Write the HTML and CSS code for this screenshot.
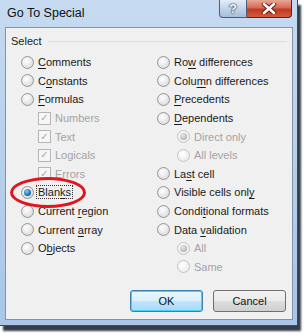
FILE: index.html
```html
<!DOCTYPE html>
<html lang="en">
<head>
    <meta charset="UTF-8">
    <title>Go To Special</title>
    <link rel="stylesheet" href="styles.css">
</head>
<body>
    <div class="window">
        <div class="titlebar">
            <span class="title">Go To Special</span>
            <div class="caption-btns">
                <div class="cap-btn help">?</div>
                <div class="cap-btn close">
                    <svg width="16" height="11" viewBox="0 0 16 11">
                        <path d="M3 1 L13 10 M13 1 L3 10" stroke="#5a1a10" stroke-width="4.4" stroke-linecap="round"/>
                        <path d="M3 1 L13 10 M13 1 L3 10" stroke="#fff" stroke-width="2.6" stroke-linecap="round"/>
                    </svg>
                </div>
            </div>
        </div>

        <div class="client">
            <div class="legend">
                <span>Select</span>
                <div class="legend-line"></div>
            </div>

            <div class="options">
                <div class="col">
                    <div class="opt"><span class="radio"></span><span><u>C</u>omments</span></div>
                    <div class="opt"><span class="radio"></span><span>C<u>o</u>nstants</span></div>
                    <div class="opt"><span class="radio"></span><span><u>F</u>ormulas</span></div>
                    <div class="opt sub-check off"><span class="check">&#10003;</span><span>Numbers</span></div>
                    <div class="opt sub-check off"><span class="check">&#10003;</span><span>Text</span></div>
                    <div class="opt sub-check off"><span class="check">&#10003;</span><span>Logicals</span></div>
                    <div class="opt sub-check off"><span class="check">&#10003;</span><span>Errors</span></div>
                    <div class="opt"><span class="radio on"></span><span class="focus">Blan<u>k</u>s</span></div>
                    <div class="opt"><span class="radio"></span><span>Current <u>r</u>egion</span></div>
                    <div class="opt"><span class="radio"></span><span>Current <u>a</u>rray</span></div>
                    <div class="opt"><span class="radio"></span><span>O<u>b</u>jects</span></div>
                </div>
                <div class="col">
                    <div class="opt"><span class="radio"></span><span>Ro<u>w</u> differences</span></div>
                    <div class="opt"><span class="radio"></span><span>Colu<u>m</u>n differences</span></div>
                    <div class="opt"><span class="radio"></span><span><u>P</u>recedents</span></div>
                    <div class="opt"><span class="radio"></span><span><u>D</u>ependents</span></div>
                    <div class="opt sub-radio off"><span class="radio on"></span><span>Direct only</span></div>
                    <div class="opt sub-radio off"><span class="radio"></span><span>All levels</span></div>
                    <div class="opt"><span class="radio"></span><span>La<u>s</u>t cell</span></div>
                    <div class="opt"><span class="radio"></span><span>Visible cells onl<u>y</u></span></div>
                    <div class="opt"><span class="radio"></span><span>Condi<u>t</u>ional formats</span></div>
                    <div class="opt"><span class="radio"></span><span>Data <u>v</u>alidation</span></div>
                    <div class="opt sub-radio off"><span class="radio on"></span><span>All</span></div>
                    <div class="opt sub-radio off"><span class="radio"></span><span>Same</span></div>
                </div>
            </div>

            <div class="buttons">
                <button class="btn default">OK</button>
                <button class="btn">Cancel</button>
            </div>

            <div class="highlight"></div>
        </div>
    </div>
</body>
</html>
```

FILE: styles.css
```css
body {
    margin: 0;
    width: 304px;
    height: 336px;
    background: #fff;
    font-family: "Liberation Sans", Arial, sans-serif;
    font-size: 11px;
    color: #1a1a1a;
    overflow: hidden;
}
.window {
    width: 297px;
    height: 325px;
    background: linear-gradient(#c6dbf1, #b9d1ec 40%, #a9c6e8);
    border-right: 1px solid #3d4a5a;
    border-bottom: 1px solid #3d4a5a;
    box-shadow: 3px 5px 2px #343d48;
    display: flex;
    flex-direction: column;
    position: relative;
}
.titlebar {
    height: 27px;
    display: flex;
    align-items: flex-start;
    justify-content: space-between;
}
.title {
    font-size: 12.5px;
    color: #111;
    padding: 6px 0 0 7px;
}
.caption-btns {
    display: flex;
    margin-right: 5px;
}
.cap-btn {
    height: 17px;
    border: 1px solid #4d5f78;
    border-top: none;
    display: flex;
    align-items: center;
    justify-content: center;
}
.help {
    width: 26px;
    border-radius: 0 0 0 4px;
    background: linear-gradient(#e3ecf6, #c3d4e8 50%, #a8bdd6);
    color: #fff;
    font-size: 13px;
    font-weight: bold;
    text-shadow: 0 0 1px #2d3d55, 0 0 1px #2d3d55, 0 0 2px #2d3d55;
}
.close {
    width: 44px;
    border-left: none;
    border-color: #5b2116;
    border-radius: 0 0 4px 0;
    background: linear-gradient(#e9a796, #d56a55 45%, #c23a22 55%, #d35a3f);
}
.client {
    flex: 1;
    margin: 0 4px 5px 5px;
    background: #f0f0f0;
    border: 1px solid #8193ab;
    position: relative;
    padding-top: 6px;
}
.legend {
    display: flex;
    align-items: center;
    padding-left: 5px;
    height: 14px;
    gap: 6px;
    padding-right: 5px;
}
.legend-line {
    flex: 1;
    height: 1px;
    background: #d5dfe5;
    margin-top: 1px;
}
.options {
    display: grid;
    grid-template-columns: 136px 1fr;
    padding: 5px 0 0 15px;
}
.col {
    display: flex;
    flex-direction: column;
}
.opt {
    height: 18.6px;
    display: flex;
    align-items: center;
    white-space: nowrap;
}
.opt u {
    text-decoration-thickness: 1px;
    text-underline-offset: 2px;
}
.off {
    color: #a3a3a3;
}
.sub-check {
    padding-left: 17px;
}
.sub-radio {
    padding-left: 20px;
}
.radio {
    width: 11px;
    height: 11px;
    border-radius: 50%;
    border: 1px solid #959595;
    background: radial-gradient(circle at 40% 35%, #fff, #e4e4e4 60%, #cfcfcf);
    margin-right: 4px;
    position: relative;
    flex: none;
}
.radio.on::after {
    content: "";
    position: absolute;
    left: 2px;
    top: 2px;
    width: 7px;
    height: 7px;
    border-radius: 50%;
    background: radial-gradient(circle at 40% 35%, #7fd0f6, #1c6fb8 60%, #103f78);
}
.off .radio {
    border-color: #c4c4c4;
    background: radial-gradient(circle at 40% 35%, #fff, #f0f0f0 60%, #e6e6e6);
}
.off .radio.on::after {
    background: radial-gradient(circle at 40% 35%, #e8e8e8, #b5b5b5 70%);
}
.check {
    width: 11px;
    height: 11px;
    border: 1px solid #b5b5b5;
    background: #f6f6f6;
    margin-right: 4px;
    display: flex;
    align-items: center;
    justify-content: center;
    font-family: "DejaVu Sans", sans-serif;
    font-size: 10px;
    line-height: 1;
    color: #a8a8a8;
    flex: none;
}
.focus {
    outline: 1px dotted #333;
    padding: 0 1px;
    margin-left: -1px;
    line-height: 12px;
}
.buttons {
    display: flex;
    justify-content: flex-end;
    gap: 10px;
    padding-right: 6px;
    margin-top: 14px;
}
.btn {
    width: 73px;
    height: 22px;
    font-family: inherit;
    font-size: 11px;
    color: #111;
    border: 1px solid #707070;
    border-radius: 3px;
    background: linear-gradient(#f2f2f2, #ebebeb 50%, #dddddd 51%, #cfcfcf);
    padding: 0;
}
.btn.default {
    border-color: #3c7fb1;
    box-shadow: inset 0 0 0 1px #48d0f6;
    background: linear-gradient(#eaf6fd, #d9f0fc 50%, #bee6fd 51%, #a7d9f5);
}
.highlight {
    position: absolute;
    left: 4px;
    top: 149px;
    width: 70px;
    height: 25px;
    border: 3px solid #e2141d;
    border-radius: 50%;
}
```
